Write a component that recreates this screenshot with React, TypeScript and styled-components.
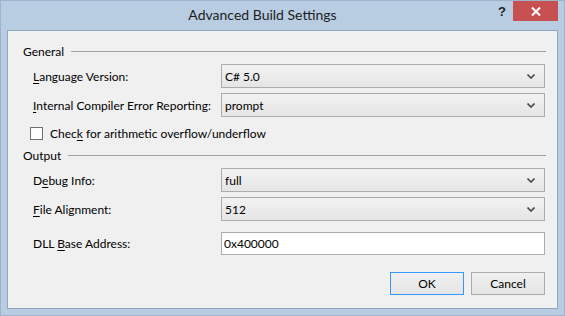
import React from "react";
import styled, { createGlobalStyle } from "styled-components";

const Global = createGlobalStyle`
  html, body { margin: 0; padding: 0; background: #b9cde2; }
  body { font-family: "Segoe UI", Lato, "Open Sans", sans-serif; }
  * { box-sizing: border-box; }
`;

const Window = styled.div`
  width: 565px;
  height: 316px;
  background: #b9cde2;
  border: 1px solid #9fb4cc;
  display: flex;
  flex-direction: column;
`;

const TitleBar = styled.div`
  height: 29px;
  display: flex;
  align-items: flex-start;
  position: relative;
`;

const Title = styled.div`
  flex: 1;
  text-align: center;
  font-size: 14px;
  line-height: 27px;
  color: #1e1e1e;
  white-space: nowrap;
  padding-right: 40px;
`;

const HelpGlyph = styled.span`
  position: absolute;
  right: 58px;
  top: 3px;
  font-family: "Liberation Sans", Arial, sans-serif;
  font-weight: bold;
  font-size: 13px;
  color: #1e1e1e;
`;

const CloseButton = styled.div`
  position: absolute;
  right: 6px;
  top: 0;
  width: 45px;
  height: 20px;
  background: #c75050;
  display: flex;
  align-items: center;
  justify-content: center;
`;

const Client = styled.div`
  margin: 0 6px 6px 6px;
  flex: 1;
  background: #f0f0f0;
  border: 1px solid #8fa6bf;
  padding: 12px 12px 13px 15px;
  display: flex;
  flex-direction: column;
  font-size: 12px;
  color: #000;
  white-space: nowrap;
`;

const GroupHeader = styled.div<{ $top: number }>`
  display: flex;
  align-items: center;
  height: 16px;
  margin-top: ${(p) => p.$top}px;
  gap: 7px;
`;

const GroupLine = styled.div`
  flex: 1;
  height: 1px;
  background: #a0a0a0;
  margin-right: -1px;
`;

const FieldRow = styled.div<{ $top: number; $h?: number }>`
  display: grid;
  grid-template-columns: 188px 1fr;
  align-items: center;
  margin-top: ${(p) => p.$top}px;
  height: ${(p) => p.$h ?? 24}px;
  padding-left: 10px;
`;

const Label = styled.span``;

const Select = styled.div`
  height: 24px;
  border: 1px solid #acacac;
  background: linear-gradient(#f2f2f2, #e5e5e5);
  display: flex;
  align-items: center;
  padding: 0 9px 0 3px;
`;

const SelectText = styled.span`
  flex: 1;
`;

const TextBox = styled.div`
  height: 23px;
  border: 1px solid #abadb3;
  background: #fff;
  display: flex;
  align-items: center;
  padding: 0 2px;
`;

const CheckRow = styled.div`
  display: flex;
  align-items: center;
  gap: 7px;
  margin-top: 10px;
  height: 13px;
  padding-left: 7px;
`;

const CheckBox = styled.div`
  width: 13px;
  height: 13px;
  border: 1px solid #707070;
  background: #fcfcfc;
`;

const ButtonBar = styled.div`
  display: flex;
  justify-content: flex-end;
  gap: 7px;
  margin-top: auto;
`;

const Button = styled.div<{ $default?: boolean }>`
  width: 74px;
  height: 23px;
  border: 1px solid ${(p) => (p.$default ? "#3399ff" : "#acacac")};
  background: linear-gradient(#f0f0f0, #e5e5e5);
  display: flex;
  align-items: center;
  justify-content: center;
`;

const U = styled.u`
  text-decoration-thickness: 1px;
  text-underline-offset: 2px;
`;

const Chevron = () => (
  <svg width="8" height="5" viewBox="0 0 8 5">
    <path d="M0.5 0.5 L4 4 L7.5 0.5" fill="none" stroke="#505050" strokeWidth="1.7" />
  </svg>
);

const CloseX = () => (
  <svg width="10" height="9" viewBox="0 0 10 9">
    <path d="M1 0.5 L9 8.5 M9 0.5 L1 8.5" stroke="#fff" strokeWidth="2" />
  </svg>
);

const Dropdown = ({ value }: { value: string }) => (
  <Select>
    <SelectText>{value}</SelectText>
    <Chevron />
  </Select>
);

export default function App() {
  return (
    <>
      <Global />
      <Window>
        <TitleBar>
          <Title>Advanced Build Settings</Title>
          <HelpGlyph>?</HelpGlyph>
          <CloseButton>
            <CloseX />
          </CloseButton>
        </TitleBar>
        <Client>
          <GroupHeader $top={0}>
            <span>General</span>
            <GroupLine />
          </GroupHeader>
          <FieldRow $top={5}>
            <Label>
              <U>L</U>anguage Version:
            </Label>
            <Dropdown value="C# 5.0" />
          </FieldRow>
          <FieldRow $top={5}>
            <Label>
              <U>I</U>nternal Compiler Error Reporting:
            </Label>
            <Dropdown value="prompt" />
          </FieldRow>
          <CheckRow>
            <CheckBox />
            <span>
              Chec<U>k</U> for arithmetic overflow/underflow
            </span>
          </CheckRow>
          <GroupHeader $top={7}>
            <span>Output</span>
            <GroupLine />
          </GroupHeader>
          <FieldRow $top={5}>
            <Label>
              D<U>e</U>bug Info:
            </Label>
            <Dropdown value="full" />
          </FieldRow>
          <FieldRow $top={5}>
            <Label>
              <U>F</U>ile Alignment:
            </Label>
            <Dropdown value="512" />
          </FieldRow>
          <FieldRow $top={11} $h={23}>
            <Label>
              DLL <U>B</U>ase Address:
            </Label>
            <TextBox>0x400000</TextBox>
          </FieldRow>
          <ButtonBar>
            <Button $default>OK</Button>
            <Button>Cancel</Button>
          </ButtonBar>
        </Client>
      </Window>
    </>
  );
}
